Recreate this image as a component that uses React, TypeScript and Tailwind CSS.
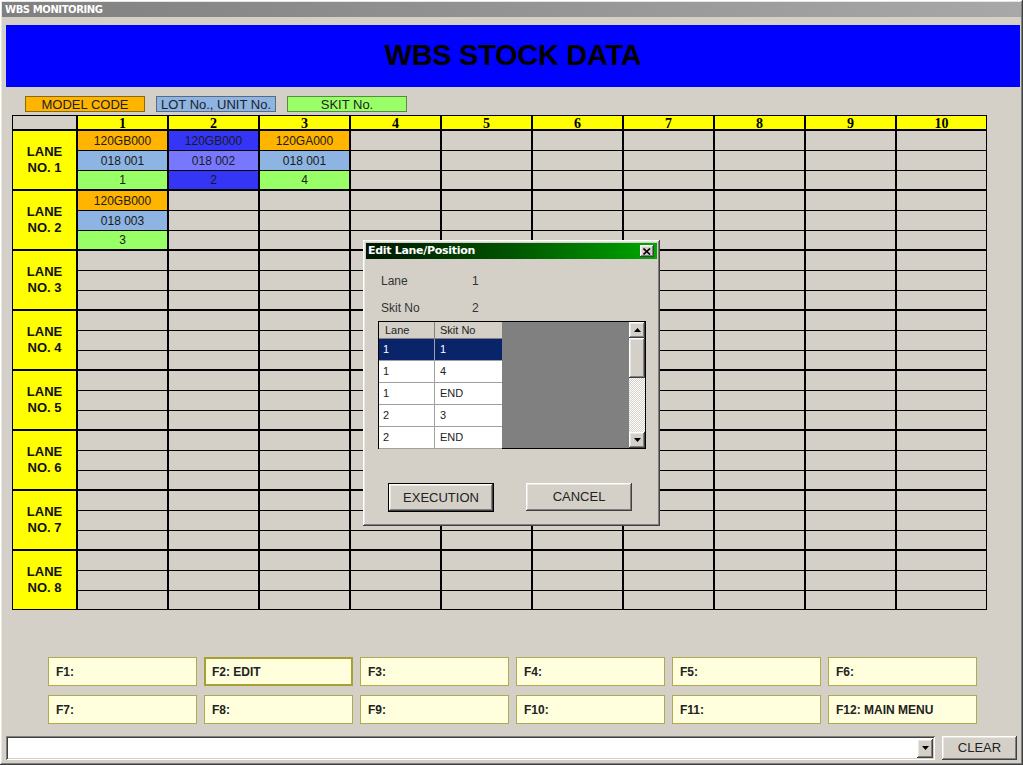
import React from "react";

/* ─── Types ─────────────────────────────────────────────── */
interface Slot {
  model: string;
  lot: string;
  skit: string;
  picked?: boolean;
}

/* ─── Static data ───────────────────────────────────────── */
const COLS = [1, 2, 3, 4, 5, 6, 7, 8, 9, 10];
const LANES = [1, 2, 3, 4, 5, 6, 7, 8];

const STOCK: Record<string, Slot> = {
  "1-1": { model: "120GB000", lot: "018 001", skit: "1" },
  "1-2": { model: "120GB000", lot: "018 002", skit: "2", picked: true },
  "1-3": { model: "120GA000", lot: "018 001", skit: "4" },
  "2-1": { model: "120GB000", lot: "018 003", skit: "3" },
};

const LIST_ROWS = [
  { lane: "1", skit: "1", sel: true },
  { lane: "1", skit: "4" },
  { lane: "1", skit: "END" },
  { lane: "2", skit: "3" },
  { lane: "2", skit: "END" },
];

const FKEYS = [
  "F1:", "F2: EDIT", "F3:", "F4:", "F5:", "F6:",
  "F7:", "F8:", "F9:", "F10:", "F11:", "F12: MAIN MENU",
];

const raised =
  "shadow-[inset_-1px_-1px_0_#404040,inset_1px_1px_0_#ffffff,inset_-2px_-2px_0_#808080,inset_2px_2px_0_#e8e6e0]";
const sunken =
  "shadow-[inset_1px_1px_0_#808080,inset_-1px_-1px_0_#ffffff,inset_2px_2px_0_#404040,inset_-2px_-2px_0_#d4d0c8]";

/* ─── Grid cell ─────────────────────────────────────────── */
function StockCell({ slot }: { slot?: Slot }) {
  if (!slot) {
    return (
      <div className="flex flex-col gap-px bg-black">
        <div className="h-[19px] bg-[#d4d0c8]" />
        <div className="h-[19px] bg-[#d4d0c8]" />
        <div className="h-[18px] bg-[#d4d0c8]" />
      </div>
    );
  }
  const top = slot.picked ? "bg-[#3535f5]" : "bg-[#ffb400]";
  const mid = slot.picked ? "bg-[#7878ff]" : "bg-[#8db4e2]";
  const bot = slot.picked ? "bg-[#3535f5]" : "bg-[#99ff66]";
  return (
    <div className="flex flex-col gap-px bg-black text-[12px] text-[#1a1a1a] leading-none">
      <div className={`h-[19px] ${top} flex items-center justify-center`}>{slot.model}</div>
      <div className={`h-[19px] ${mid} flex items-center justify-center`}>{slot.lot}</div>
      <div className={`h-[18px] ${bot} flex items-center justify-center`}>{slot.skit}</div>
    </div>
  );
}

/* ─── Edit dialog ───────────────────────────────────────── */
function EditDialog() {
  return (
    <div
      className={`absolute left-[363px] top-[240px] w-[297px] h-[286px] bg-[#d4d0c8] p-[3px] ${raised}`}
    >
      {/* title bar */}
      <div className="h-[16px] flex items-center justify-between pl-[2px] pr-[3px] bg-gradient-to-r from-[#001800] via-[#005500] to-[#00a800]">
        <span className="text-white text-[11px] font-bold font-['DejaVu_Sans',sans-serif] tracking-[-0.3px]">
          Edit Lane/Position
        </span>
        <span
          className={`w-[14px] h-[12px] bg-[#d4d0c8] flex items-center justify-center ${raised}`}
        >
          <svg width="8" height="7" viewBox="0 0 8 7">
            <path d="M0.5 0.5L7 6.5M7 0.5L0.5 6.5" stroke="#000" strokeWidth="1.6" />
          </svg>
        </span>
      </div>

      <div className="relative">
        <div className="absolute left-[15px] top-[13px] flex text-[12px] text-[#333]">
          <span className="w-[91px]">Lane</span>
          <span>1</span>
        </div>
        <div className="absolute left-[15px] top-[40px] flex text-[12px] text-[#333]">
          <span className="w-[91px]">Skit No</span>
          <span>2</span>
        </div>

        {/* list */}
        <div className="absolute left-[12px] top-[62px] w-[268px] h-[128px] border border-black bg-[#808080] flex">
          <div className="w-[123px] flex flex-col text-[11px] text-[#222]">
            <div className="h-[17px] flex bg-[#d4d0c8] border-b border-[#808080]">
              <span className="w-[56px] pl-[6px] border-r border-[#808080] leading-[16px]">Lane</span>
              <span className="flex-1 pl-[5px] leading-[16px]">Skit No</span>
            </div>
            {LIST_ROWS.map((r, i) => (
              <div
                key={i}
                className={`h-[22px] flex border-b border-[#a0a0a0] ${
                  r.sel ? "bg-[#0a246a] text-white" : "bg-white"
                }`}
              >
                <span className="w-[56px] pl-[4px] border-r border-[#a0a0a0] leading-[21px]">{r.lane}</span>
                <span className="flex-1 pl-[5px] leading-[21px]">{r.skit}</span>
              </div>
            ))}
          </div>
          <div className="flex-1" />
          {/* scrollbar */}
          <div className="w-[16px] flex flex-col bg-[repeating-conic-gradient(#ffffff_0_25%,#d4d0c8_0_50%)] bg-[length:2px_2px]">
            <div className={`h-[16px] bg-[#d4d0c8] flex items-center justify-center ${raised}`}>
              <svg width="7" height="4" viewBox="0 0 7 4"><path d="M3.5 0L7 4H0z" fill="#000" /></svg>
            </div>
            <div className={`h-[40px] bg-[#d4d0c8] ${raised}`} />
            <div className="flex-1" />
            <div className={`h-[16px] bg-[#d4d0c8] flex items-center justify-center ${raised}`}>
              <svg width="7" height="4" viewBox="0 0 7 4"><path d="M0 0H7L3.5 4z" fill="#000" /></svg>
            </div>
          </div>
        </div>

        {/* buttons */}
        <div className="absolute left-[22px] top-[224px] w-[106px] h-[29px] border border-black">
          <div className={`w-full h-full bg-[#d4d0c8] flex items-center justify-center text-[13px] text-[#222] ${raised}`}>
            EXECUTION
          </div>
        </div>
        <div
          className={`absolute left-[160px] top-[224px] w-[106px] h-[28px] bg-[#d4d0c8] flex items-center justify-center text-[13px] text-[#222] ${raised}`}
        >
          CANCEL
        </div>
      </div>
    </div>
  );
}

/* ─── App ───────────────────────────────────────────────── */
export default function App() {
  return (
    <div
      className={`relative w-[1023px] h-[765px] overflow-hidden bg-[#d4d0c8] font-['Liberation_Sans',Arial,sans-serif] ${raised}`}
    >
      {/* window title */}
      <div className="mx-[2px] mt-[2px] h-[15px] bg-gradient-to-r from-[#808080] to-[#a8a8a8] flex items-center pl-[3px]">
        <span className="text-white text-[10px] font-bold font-['DejaVu_Sans',sans-serif] tracking-[-0.4px]">
          WBS MONITORING
        </span>
      </div>

      {/* banner */}
      <div className="ml-[6px] mr-[3px] mt-[8px] h-[62px] bg-[#0000ff] flex items-center justify-center">
        <h1 className="text-[29px] font-bold text-black tracking-[-0.3px]">WBS STOCK DATA</h1>
      </div>

      {/* legend */}
      <div className="flex gap-[11px] ml-[25px] mt-[9px] text-[13px] text-[#222] leading-none">
        <div className="w-[120px] h-[16px] bg-[#ffb400] border border-[#8a6a10] flex items-center justify-center">
          MODEL CODE
        </div>
        <div className="w-[120px] h-[16px] bg-[#8db4e2] border border-[#5a6a80] flex items-center justify-center">
          LOT No., UNIT No.
        </div>
        <div className="w-[120px] h-[16px] bg-[#99ff66] border border-[#5a8a40] flex items-center justify-center">
          SKIT No.
        </div>
      </div>

      {/* stock grid */}
      <div className="ml-[12px] mt-[3px] w-[975px] bg-black p-px grid grid-cols-[63px_repeat(10,89px)] gap-[2px]">
        <div className="h-[13px] bg-[#d4d0c8]" />
        {COLS.map((c) => (
          <div
            key={c}
            className="h-[13px] bg-[#ffff00] flex items-center justify-center text-[14px] font-bold font-['Liberation_Serif',serif] text-black leading-none pt-[2px]"
          >
            {c}
          </div>
        ))}
        {LANES.map((l) => (
          <React.Fragment key={l}>
            <div className="h-[58px] bg-[#ffff00] flex flex-col items-center justify-center text-[13px] font-bold text-[#111] leading-[16px]">
              <span>LANE</span>
              <span>NO. {l}</span>
            </div>
            {COLS.map((c) => (
              <StockCell key={c} slot={STOCK[`${l}-${c}`]} />
            ))}
          </React.Fragment>
        ))}
      </div>

      {/* function keys */}
      <div className="ml-[48px] mt-[47px] grid grid-cols-[repeat(6,149px)] gap-x-[7px] gap-y-[9px]">
        {FKEYS.map((k) => (
          <div
            key={k}
            className={`h-[29px] bg-[#ffffdd] flex items-center text-[12px] font-bold text-[#222] ${
              k === "F2: EDIT" ? "border-2 border-[#a8a030] pl-[6px]" : "border border-[#b0aa50] pl-[7px]"
            }`}
          >
            {k}
          </div>
        ))}
      </div>

      {/* message bar */}
      <div className="flex ml-[6px] mt-[12px] gap-[7px]">
        <div className={`w-[929px] h-[24px] bg-white flex justify-end items-center pr-[2px] ${sunken}`}>
          <div className={`w-[16px] h-[19px] bg-[#d4d0c8] flex items-center justify-center ${raised}`}>
            <svg width="7" height="4" viewBox="0 0 7 4"><path d="M0 0H7L3.5 4z" fill="#000" /></svg>
          </div>
        </div>
        <div className={`w-[75px] h-[24px] bg-[#d4d0c8] flex items-center justify-center text-[13px] text-[#222] ${raised}`}>
          CLEAR
        </div>
      </div>

      <EditDialog />
    </div>
  );
}
